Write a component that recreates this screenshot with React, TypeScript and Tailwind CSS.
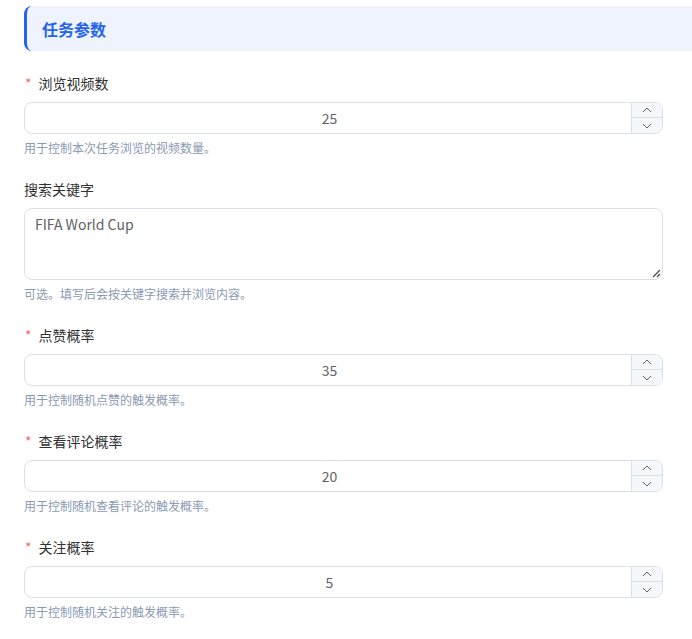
import React from "react";

function Spinner() {
  return (
    <div className="flex w-[31px] flex-col border-l border-[#dcdfe6] bg-[#f5f7fa]">
      <div className="flex h-1/2 items-center justify-center border-b border-[#dcdfe6]">
        <svg width="10" height="6" viewBox="0 0 10 6" fill="none">
          <path d="M1 5L5 1L9 5" stroke="#606266" strokeWidth="1" />
        </svg>
      </div>
      <div className="flex h-1/2 items-center justify-center">
        <svg width="10" height="6" viewBox="0 0 10 6" fill="none">
          <path d="M1 1L5 5L9 1" stroke="#606266" strokeWidth="1" />
        </svg>
      </div>
    </div>
  );
}

function NumberField({ label, value, help }: { label: string; value: string; help: string }) {
  return (
    <div className="flex flex-col">
      <div className="flex h-[22px] items-center text-[14px] text-[#303133]">
        <span className="ml-[1px] mr-[7px] text-[#f56c6c]">*</span>
        <span>{label}</span>
      </div>
      <div className="mt-[8px] flex h-[32px] overflow-hidden rounded-[8px] border border-[#dcdfe6] bg-white">
        <div className="flex flex-1 items-center justify-center pl-[3px] text-[14px] text-[#606266]">{value}</div>
        <Spinner />
      </div>
      <div className="mt-[5px] h-[18px] text-[12px] leading-[18px] text-[#8b9ab3]">{help}</div>
    </div>
  );
}

export default function App() {
  return (
    <div
      className="min-h-[639px] w-[692px] overflow-hidden bg-white"
      style={{ fontFamily: '"Noto Sans CJK SC", "Noto Sans", sans-serif' }}
    >
      <div className="pl-[24px] pt-[6px]">
        <div className="flex h-[45px] items-center rounded-l-[8px] border-l-[3px] border-[#2563eb] bg-[#eef3fd] pl-[15px] text-[16px] font-bold text-[#2563eb]">
          任务参数
        </div>
      </div>
      <div className="flex flex-col gap-[21px] pl-[24px] pr-[29px] pt-[21px]">
        <NumberField label="浏览视频数" value="25" help="用于控制本次任务浏览的视频数量。" />
        <div className="flex flex-col">
          <div className="flex h-[22px] items-center text-[14px] text-[#303133]">
            <span>搜索关键字</span>
          </div>
          <div className="relative mt-[8px] h-[72px] rounded-[8px] border border-[#dcdfe6] bg-white px-[10px] py-[5px] text-[14px] text-[#606266]">
            FIFA World Cup
            <svg className="absolute bottom-[1px] right-[1px]" width="10" height="10" viewBox="0 0 10 10">
              <path d="M9 2L2 9M9 6L6 9" stroke="#4b4b4b" strokeWidth="1.2" />
            </svg>
          </div>
          <div className="mt-[5px] h-[18px] text-[12px] leading-[18px] text-[#8b9ab3]">可选。填写后会按关键字搜索并浏览内容。</div>
        </div>
        <NumberField label="点赞概率" value="35" help="用于控制随机点赞的触发概率。" />
        <NumberField label="查看评论概率" value="20" help="用于控制随机查看评论的触发概率。" />
        <NumberField label="关注概率" value="5" help="用于控制随机关注的触发概率。" />
      </div>
    </div>
  );
}
